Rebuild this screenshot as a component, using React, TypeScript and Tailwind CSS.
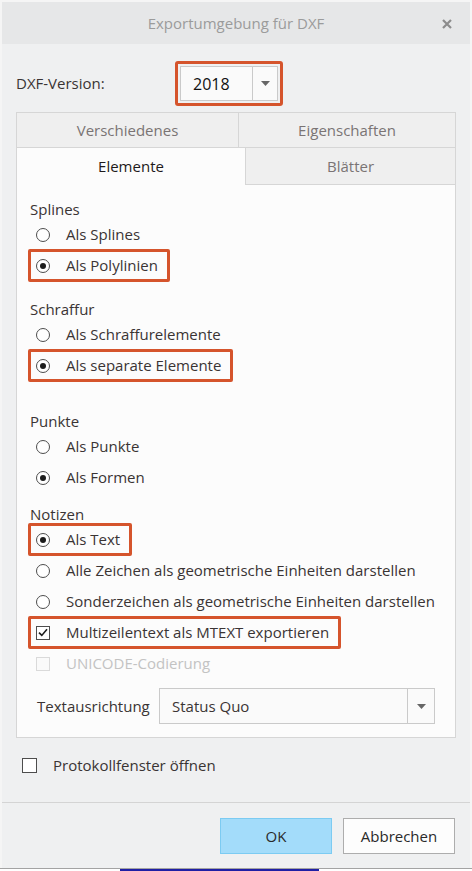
import React from "react";

const FONT = { fontFamily: '"Open Sans", "Noto Sans", sans-serif' };

function Radio({ checked }: { checked?: boolean }) {
  return (
    <span className="flex h-[14px] w-[14px] shrink-0 items-center justify-center rounded-full border border-[#4d4d4d] bg-white">
      {checked && <span className="h-[6px] w-[6px] rounded-full bg-[#1c1c1c]" />}
    </span>
  );
}

function Check({ checked, disabled, size = 14 }: { checked?: boolean; disabled?: boolean; size?: number }) {
  return (
    <span
      className={
        "flex shrink-0 items-center justify-center border " +
        (disabled ? "border-[#dadada] bg-[#fafafa]" : "border-[#4d4d4d] bg-white") +
        (size === 15 ? " h-[15px] w-[15px]" : " h-[14px] w-[14px]")
      }
    >
      {checked && (
        <svg width="10" height="9" viewBox="0 0 10 9">
          <path d="M1 4.6 L3.8 7.4 L9 1.2" fill="none" stroke="#1c1c1c" strokeWidth="1.6" />
        </svg>
      )}
    </span>
  );
}

function Row({
  kind,
  checked,
  label,
  hl,
  disabled,
}: {
  kind: "radio" | "check";
  checked?: boolean;
  label: string;
  hl?: boolean;
  disabled?: boolean;
}) {
  return (
    <div className="flex h-[31px] items-center">
      <div
        className={
          "flex h-[33px] items-center rounded-[2px] border-[3px] pl-[5px] pr-[9px] " +
          (hl ? "border-[#d5542c]" : "border-transparent")
        }
      >
        {kind === "radio" ? <Radio checked={checked} /> : <Check checked={checked} disabled={disabled} />}
        <span
          className={
            "ml-[16px] whitespace-nowrap text-[15px] leading-none " +
            (disabled ? "text-[#c3c3c3]" : "text-[#3a3434]")
          }
        >
          {label}
        </span>
      </div>
    </div>
  );
}

function Heading({ children, mt }: { children: React.ReactNode; mt: string }) {
  return (
    <div className={"flex h-[20px] items-center pl-[2px] text-[15px] text-[#3a3434] " + mt}>{children}</div>
  );
}

function Arrow() {
  return (
    <svg width="9" height="5" viewBox="0 0 9 5">
      <path d="M0 0 H9 L4.5 5 Z" fill="#666" />
    </svg>
  );
}

export default function App() {
  return (
    <div style={FONT} className="flex h-[871px] w-[472px] flex-col overflow-hidden bg-[#f5f5f5]">
      <div className="mx-[2px] mt-[2px] flex flex-1 flex-col bg-[#eff0f1]">
        {/* title bar */}
        <div className="relative flex h-[42px] shrink-0 items-center justify-center bg-[#e6e7e8]">
          <span className="text-[15px] text-[#9b9b9b]">Exportumgebung für DXF</span>
          <svg className="absolute right-[18px] top-[17px]" width="10" height="10" viewBox="0 0 10 10">
            <path d="M1 1 L9 9 M9 1 L1 9" stroke="#8c8c8c" strokeWidth="2.2" />
          </svg>
        </div>

        {/* version row */}
        <div className="mt-[17px] flex h-[45px] items-center">
          <span className="ml-[14px] w-[159px] text-[15px] text-[#3a3434]">DXF-Version:</span>
          <div className="flex h-[45px] w-[108px] items-center justify-center rounded-[3px] border-[3px] border-[#d5542c]">
            <div className="flex h-[35px] w-[98px] border border-[#cacaca] bg-[#fafafa]">
              <div className="flex flex-1 items-center pl-[12px] text-[16px] text-[#111]">2018</div>
              <div className="flex w-[25px] items-center justify-center border-l border-[#cacaca]">
                <Arrow />
              </div>
            </div>
          </div>
        </div>

        {/* tabs */}
        <div className="ml-[14px] mt-[6px] flex w-[440px] flex-col">
          <div className="flex h-[36px] border border-[#d6d6d6] bg-[#efefef] text-[15px] text-[#7a7474]">
            <div className="flex w-[222px] items-center justify-center border-r border-[#d6d6d6]">Verschiedenes</div>
            <div className="flex flex-1 items-center justify-center">Eigenschaften</div>
          </div>
          <div className="flex h-[37px] text-[15px]">
            <div className="flex w-[229px] items-center justify-center border-l border-[#d6d6d6] bg-[#fcfcfc] text-[#1e1a1a]">
              Elemente
            </div>
            <div className="flex flex-1 items-center justify-center border-x border-b border-[#d6d6d6] bg-[#efefef] text-[#7a7474]">
              Blätter
            </div>
          </div>
          <div className="flex flex-col border-x border-b border-[#d6d6d6] bg-[#fcfcfc] pb-[13px] pl-[11px] pt-[14px]">
            <Heading mt="">Splines</Heading>
            <Row kind="radio" label="Als Splines" />
            <Row kind="radio" checked hl label="Als Polylinien" />
            <Heading mt="mt-[18px]">Schraffur</Heading>
            <Row kind="radio" label="Als Schraffurelemente" />
            <Row kind="radio" checked hl label="Als separate Elemente" />
            <Heading mt="mt-[30px]">Punkte</Heading>
            <Row kind="radio" label="Als Punkte" />
            <Row kind="radio" checked label="Als Formen" />
            <Heading mt="mt-[11px]">Notizen</Heading>
            <Row kind="radio" checked hl label="Als Text" />
            <Row kind="radio" label="Alle Zeichen als geometrische Einheiten darstellen" />
            <Row kind="radio" label="Sonderzeichen als geometrische Einheiten darstellen" />
            <Row kind="check" checked hl label="Multizeilentext als MTEXT exportieren" />
            <Row kind="check" disabled label="UNICODE-Codierung" />
            <div className="mt-[9px] flex h-[36px] items-center">
              <span className="ml-[9px] w-[122px] text-[15px] text-[#3a3434]">Textausrichtung</span>
              <div className="flex h-[36px] w-[276px] border border-[#cacaca] bg-[#fafafa]">
                <div className="flex flex-1 items-center pl-[12px] text-[15px] text-[#3a3434]">Status Quo</div>
                <div className="flex w-[27px] items-center justify-center border-l border-[#cacaca]">
                  <Arrow />
                </div>
              </div>
            </div>
          </div>
        </div>

        {/* protokoll */}
        <div className="ml-[20px] mt-[20px] flex h-[15px] items-center">
          <Check size={15} />
          <span className="ml-[16px] text-[15px] text-[#3a3434]">Protokollfenster öffnen</span>
        </div>

        <div className="mt-[29px] h-px bg-[#d4d4d4]" />

        <div className="mr-[15px] mt-[15px] flex justify-end gap-[11px]">
          <button className="flex h-[36px] w-[112px] items-center justify-center border border-[#7ccbf2] bg-[#a3dcfa] text-[15px] text-[#2a2a2a]">
            OK
          </button>
          <button className="flex h-[36px] w-[112px] items-center justify-center border border-[#adadad] bg-[#fdfdfd] text-[15px] text-[#2a2a2a]">
            Abbrechen
          </button>
        </div>
        <div className="flex-1" />
      </div>
      <div className="h-px shrink-0 bg-[#a3a3a3]" />
      <div className="flex h-[2px] shrink-0 bg-white">
        <div className="ml-[120px] w-[199px] bg-[#1f1fa5]" />
      </div>
    </div>
  );
}
